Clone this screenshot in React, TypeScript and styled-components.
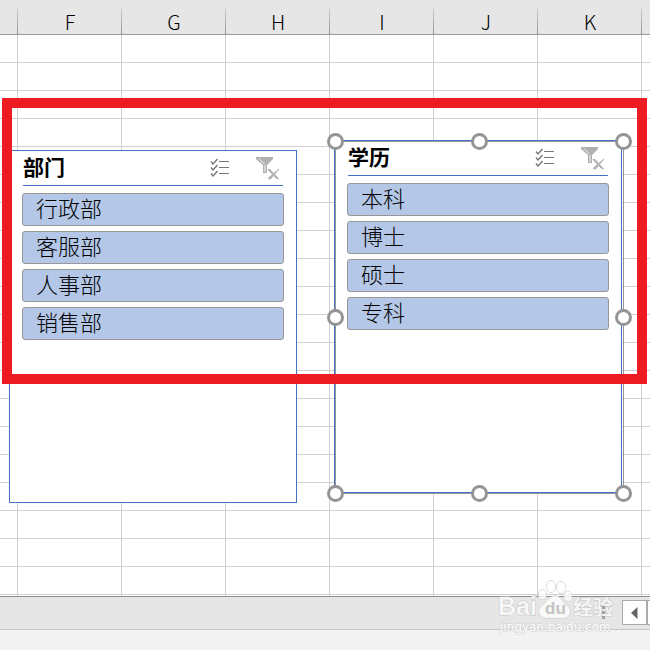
import React from 'react';
import styled, { createGlobalStyle } from 'styled-components';

const GlobalStyle = createGlobalStyle`
  * { box-sizing: border-box; }
  body {
    margin: 0;
    background: #f2f2f2;
    color: #000;
    font-family: 'Noto Sans CJK SC', 'Noto Sans', sans-serif;
  }
`;

const Page = styled.div`
  display: flex;
  flex-direction: column;
  min-height: 100vh;
`;

const Canvas = styled.main`
  position: relative;
  background: #fff;
  border-bottom: 1px solid #8f8f8f;
`;

const Grid = styled.table`
  width: 100%;
  table-layout: fixed;
  border-collapse: separate;
  border-spacing: 0;
`;

const Col = styled.col<{ $width?: number }>`
  width: ${({ $width }) => ($width ? `${$width}px` : 'auto')};
`;

const HeadCell = styled.th`
  height: 35px;
  padding: 10px 0 0;
  border-bottom: 1px solid #999;
  background:
    linear-gradient(#d4d4d4, #939393) right bottom / 1px 27px no-repeat,
    #e6e6e6;
  font-size: 20px;
  line-height: 24px;
  font-weight: 300;
  text-align: center;

  &:last-child {
    background: #e6e6e6;
  }
`;

const Cell = styled.td`
  height: 28px;
  padding: 0;
  border-right: 1px solid #d0d0d0;
  border-bottom: 1px solid #d0d0d0;

  &:last-child {
    border-right: 0;
  }
`;

const LastStrip = styled.tr`
  td {
    height: 1px;
    border-bottom: 0;
  }
`;

const SlicerBox = styled.section<{ $left: number; $top: number }>`
  position: absolute;
  left: ${({ $left }) => $left}px;
  top: ${({ $top }) => $top}px;
  display: flex;
  flex-direction: column;
  gap: 7px;
  width: 288px;
  height: 353px;
  padding: 0 12px;
  background: #fff;
  border: 1px solid #4472c4;
`;

const SlicerHead = styled.header`
  display: flex;
  align-items: flex-start;
  height: 35px;
  margin: 0 1px;
  padding-right: 3px;
  border-bottom: 1px solid #4472c4;
`;

const SlicerTitle = styled.h2`
  flex: 1;
  margin: 0;
  font-size: 21px;
  line-height: 30px;
  font-weight: 700;
`;

const IconButton = styled.button`
  width: 24px;
  height: 24px;
  margin-top: 5px;
  padding: 0;
  border: 0;
  background: none;

  & + & {
    margin-left: 24px;
  }

  svg {
    display: block;
  }
`;

const ItemList = styled.ul`
  display: flex;
  flex-direction: column;
  gap: 5px;
  margin: 0;
  padding: 0;
  list-style: none;
`;

const Item = styled.button`
  display: block;
  width: 100%;
  height: 33px;
  padding: 0 13px 4px;
  border: 1px solid #979797;
  border-radius: 3px;
  background: #b4c7e7;
  color: #000;
  font: inherit;
  font-size: 22px;
  line-height: 27px;
  font-weight: 300;
  text-align: left;
`;

const Selection = styled.div`
  position: absolute;
  left: 335px;
  top: 141px;
  width: 288px;
  height: 352px;
  pointer-events: none;

  &::before {
    content: '';
    position: absolute;
    inset: 0 -1px -1px 0;
    border: 1px solid #979797;
  }
`;

const Handle = styled.span<{ $x: number; $y: number }>`
  position: absolute;
  left: ${({ $x }) => $x}%;
  top: ${({ $y }) => $y}%;
  width: 17px;
  height: 17px;
  margin: -8px;
  border: 3px solid #949494;
  border-radius: 50%;
  background: #fff;
`;

const RedFrame = styled.div`
  position: absolute;
  left: 2px;
  right: 3px;
  top: 98px;
  height: 286px;
  border: 10px solid #ed1c24;
  pointer-events: none;
`;

const SheetBar = styled.footer`
  position: relative;
  display: flex;
  justify-content: flex-end;
  align-items: flex-start;
  height: 33px;
  padding-top: 3px;
  background: #e6e6e6;
  border-bottom: 1px solid #c6c6c6;
`;

const Splitter = styled.span`
  position: relative;
  display: flex;
  flex-direction: column;
  gap: 2px;
  width: 3px;
  margin: 6px 17px 0 0;

  i {
    height: 3px;
    background: #a0a0a0;
  }
`;

const ScrollButton = styled.button`
  display: grid;
  place-items: center;
  width: 25px;
  height: 25px;
  padding: 0;
  border: 1px solid #ababab;
  background: #fff;
`;

const ScrollTrack = styled.span`
  width: 3px;
  height: 25px;
  border: 1px solid #ababab;
  border-right: 0;
  background: #fff;
`;

const WatermarkSvg = styled.svg`
  position: absolute;
  right: 34px;
  bottom: -9px;
  pointer-events: none;
  font-family: 'Liberation Sans', 'Noto Sans CJK SC', sans-serif;
`;

const columns = ['', 'F', 'G', 'H', 'I', 'J', 'K', ''];
const rows = Array.from({ length: 20 }, (_, i) => i);

const MultiSelectIcon = () => (
  <svg width="24" height="24" viewBox="0 0 24 24" fill="none" stroke="#777">
    <path d="M11 5.5h10M11 11.5h10M11 17.5h10" />
    <path d="M3 5.5l2 2.5L9.5 3M3 11.5l2 2.5L9.5 9M3 17.5l2 2.5L9.5 15" strokeWidth="1.4" />
  </svg>
);

const ClearFilterIcon = () => (
  <svg width="24" height="24" viewBox="0 0 24 24" fill="none">
    <path d="M0 1h17v2l-6 6v8H7V9L0 3z" fill="#b0b0b0" />
    <path d="M9 9v7M3 2.5l5.5 5.5" stroke="#f4f4f4" />
    <path d="M12.5 13.5l10 9.5M22.5 13.5l-10 9.5" stroke="#fff" strokeWidth="4" />
    <path d="M12 13.5h2l8.5 9.5l-2.5-1zM23 13l-11 9.5l2.5 0.5z" fill="#b0b0b0" stroke="#b0b0b0" />
  </svg>
);

const toes = [[46.5, 18.5, 4, 5], [55, 10.5, 4.5, 6], [65, 11.5, 4.5, 6], [72, 20.5, 4, 5]];

const Watermark = () => (
  <WatermarkSvg width="120" height="62" viewBox="0 0 120 62" role="img" aria-label="Baidu 经验">
    <g fill="#fff" fillOpacity="0.75" stroke="#c4c4c4" strokeOpacity="0.9" strokeWidth="1" paintOrder="stroke">
      {toes.map(([cx, cy, rx, ry]) => <ellipse key={cx} cx={cx} cy={cy} rx={rx} ry={ry} />)}
      <path d="M59 20c-6 0-8 5-11 8c-3 2-5 4-5 7c0 4 3 7 7 7h18c4 0 6-3 6-7c0-3-2-5-5-7c-3-3-4-8-10-8z" />
      <text x="2" y="39" fontSize="25" fontWeight="700">Bai</text>
      <text x="77" y="39" fontSize="20" fontWeight="700">经验</text>
    </g>
    <text x="49" y="38" fontSize="17" fontWeight="700" fill="#c4c4c4">du</text>
    <text
      x="4"
      y="55"
      fontSize="12"
      fontFamily="'DejaVu Sans', sans-serif"
      fill="#fff"
      stroke="#d0d0d0"
      strokeWidth="1"
      paintOrder="stroke"
    >
      jingyan.baidu.com
    </text>
  </WatermarkSvg>
);

type SlicerProps = { title: string; items: string[]; left: number; top: number };

const Slicer = ({ title, items, left, top }: SlicerProps) => (
  <SlicerBox $left={left} $top={top} aria-label={title}>
    <SlicerHead>
      <SlicerTitle>{title}</SlicerTitle>
      <IconButton type="button" aria-label="多选"><MultiSelectIcon /></IconButton>
      <IconButton type="button" aria-label="清除筛选器"><ClearFilterIcon /></IconButton>
    </SlicerHead>
    <ItemList>
      {items.map((item) => (
        <li key={item}><Item type="button" aria-pressed="true">{item}</Item></li>
      ))}
    </ItemList>
  </SlicerBox>
);

const handles = [[0, 0], [50, 0], [100, 0], [0, 50], [100, 50], [0, 100], [50, 100], [100, 100]];

export default function App() {
  return (
    <Page>
      <GlobalStyle />
      <Canvas>
        <Grid>
          <colgroup>
            <Col $width={18} />
            {columns.slice(1, -1).map((c) => <Col key={c} $width={104} />)}
            <Col />
          </colgroup>
          <thead>
            <tr>{columns.map((c, i) => <HeadCell key={i} scope="col">{c}</HeadCell>)}</tr>
          </thead>
          <tbody>
            {rows.map((r) => <tr key={r}>{columns.map((_, i) => <Cell key={i} />)}</tr>)}
            <LastStrip>{columns.map((_, i) => <Cell key={i} />)}</LastStrip>
          </tbody>
        </Grid>
        <Slicer title="部门" items={['行政部', '客服部', '人事部', '销售部']} left={9} top={150} />
        <Slicer title="学历" items={['本科', '博士', '硕士', '专科']} left={334} top={140} />
        <Selection>
          {handles.map(([x, y]) => <Handle key={`${x}-${y}`} $x={x} $y={y} />)}
        </Selection>
        <RedFrame />
      </Canvas>
      <SheetBar>
        <Watermark />
        <Splitter><i /><i /><i /></Splitter>
        <ScrollButton type="button" aria-label="向左滚动">
          <svg width="7" height="12" viewBox="0 0 7 12"><path d="M6.5 0v12L0 6z" fill="#666" /></svg>
        </ScrollButton>
        <ScrollTrack />
      </SheetBar>
    </Page>
  );
}
